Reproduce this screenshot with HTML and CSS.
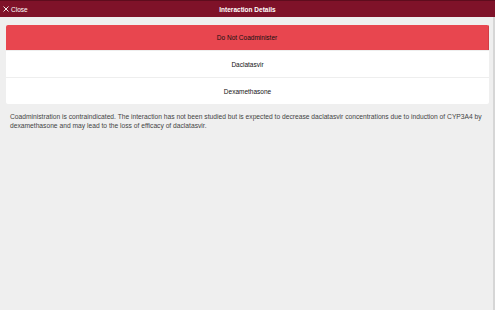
FILE: index.html
```html
<!DOCTYPE html>
<html lang="en">
<head>
    <meta charset="UTF-8">
    <meta name="viewport" content="width=device-width, initial-scale=1.0">
    <title>Interaction Details</title>
    <link rel="stylesheet" href="styles.css">
</head>
<body>
    <div class="header">
        <div class="close">
            <svg width="6" height="6" viewBox="0 0 6 6"><path d="M0.5 0.5L5.5 5.5M5.5 0.5L0.5 5.5" stroke="#fff" stroke-width="0.9"/></svg>
            <span>Close</span>
        </div>
        <div class="title">Interaction Details</div>
    </div>

    <div class="content">
        <div class="card">
            <div class="row danger">Do Not Coadminister</div>
            <div class="row">Daclatasvir</div>
            <div class="row">Dexamethasone</div>
        </div>

        <p class="note">Coadministration is contraindicated. The interaction has not been studied but is expected to decrease daclatasvir concentrations due to induction of CYP3A4 by dexamethasone and may lead to the loss of efficacy of daclatasvir.</p>
    </div>
</body>
</html>
```

FILE: styles.css
```css
body {
    font-family: "Liberation Sans", Arial, sans-serif;
    background-color: #efefef;
    margin: 0;
}
.header {
    background-color: #7f1229;
    height: 17px;
    border-top: 1px solid #5e0c1d;
    box-sizing: border-box;
    position: relative;
    display: flex;
    justify-content: center;
    align-items: center;
    color: #fff;
    font-size: 6.5px;
}
.close {
    position: absolute;
    left: 3px;
    top: 0;
    height: 100%;
    display: flex;
    align-items: center;
    gap: 2px;
}
.title {
    font-weight: bold;
}
.content {
    height: 293px;
    box-sizing: border-box;
    padding-top: 8px;
    border-right: 2px solid #d6d6d6;
}
.card {
    background-color: #fff;
    margin: 0 4px 0 6px;
    border-radius: 2px;
    overflow: hidden;
}
.row {
    height: 27px;
    display: flex;
    justify-content: center;
    align-items: center;
    font-size: 6.5px;
    color: #111;
    border-top: 1px solid #eeeeee;
    box-sizing: border-box;
}
.row.danger {
    height: 25px;
    background-color: #e8464f;
    border-top: none;
    border-right: 1px solid #d23c45;
}
.note {
    margin: 8px 10px 0 10px;
    font-size: 6.7px;
    line-height: 9px;
    color: #444;
}
```
